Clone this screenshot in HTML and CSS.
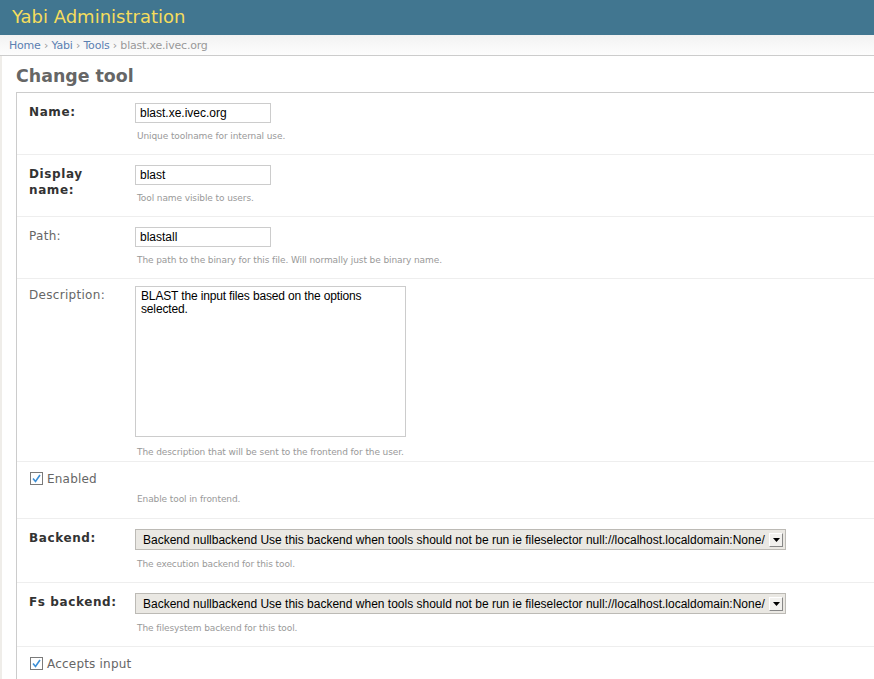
FILE: index.html
```html
<!DOCTYPE html>
<html>
<head>
<meta charset="utf-8">
<link rel="stylesheet" href="styles.css">
</head>
<body>
<div class="header"><span class="brand">Yabi Administration</span></div>
<div class="breadcrumbs"><a href="#">Home</a> › <a href="#">Yabi</a> › <a href="#">Tools</a> › blast.xe.ivec.org</div>
<div class="content">
  <h1 class="title">Change tool</h1>
  <div class="module">
    <div class="row">
      <div class="label req">Name:</div>
      <div class="field">
        <div class="input">blast.xe.ivec.org</div>
        <p class="help">Unique toolname for internal use.</p>
      </div>
    </div>
    <div class="row">
      <div class="label req">Display name:</div>
      <div class="field">
        <div class="input">blast</div>
        <p class="help">Tool name visible to users.</p>
      </div>
    </div>
    <div class="row">
      <div class="label">Path:</div>
      <div class="field">
        <div class="input">blastall</div>
        <p class="help">The path to the binary for this file. Will normally just be binary name.</p>
      </div>
    </div>
    <div class="row row-text">
      <div class="label">Description:</div>
      <div class="field">
        <div class="textarea">BLAST the input files based on the options selected.</div>
        <p class="help help-wide">The description that will be sent to the frontend for the user.</p>
      </div>
    </div>
    <div class="row check-row">
      <div class="check"><span class="box"><svg width="11" height="11" viewBox="0 0 11 11"><path d="M2 5.5 L4.5 8.5 L9 2" fill="none" stroke="#3c8fd6" stroke-width="1.6"/></svg></span>Enabled</div>
      <p class="help indent">Enable tool in frontend.</p>
    </div>
    <div class="row">
      <div class="label req">Backend:</div>
      <div class="field">
        <div class="select"><span class="sel-text">Backend nullbackend Use this backend when tools should not be run ie fileselector null://localhost.localdomain:None/</span><span class="arrow"><svg width="7" height="4" viewBox="0 0 7 4"><path d="M0 0 H7 L3.5 4 Z" fill="#000"/></svg></span></div>
        <p class="help help-sel">The execution backend for this tool.</p>
      </div>
    </div>
    <div class="row">
      <div class="label req">Fs backend:</div>
      <div class="field">
        <div class="select"><span class="sel-text">Backend nullbackend Use this backend when tools should not be run ie fileselector null://localhost.localdomain:None/</span><span class="arrow"><svg width="7" height="4" viewBox="0 0 7 4"><path d="M0 0 H7 L3.5 4 Z" fill="#000"/></svg></span></div>
        <p class="help help-sel">The filesystem backend for this tool.</p>
      </div>
    </div>
    <div class="row check-row">
      <div class="check"><span class="box"><svg width="11" height="11" viewBox="0 0 11 11"><path d="M2 5.5 L4.5 8.5 L9 2" fill="none" stroke="#3c8fd6" stroke-width="1.6"/></svg></span>Accepts input</div>
    </div>
  </div>
</div>
</body>
</html>
```

FILE: styles.css
```css
html, body { margin: 0; padding: 0; }
body {
  font-family: "DejaVu Sans", sans-serif;
  font-size: 12px;
  color: #333;
  background: #fff;
  overflow: hidden;
  height: 679px;
}
.header {
  height: 35px;
  background: #417690;
  padding-left: 12px;
  display: flex;
  align-items: center;
}
.brand {
  color: #f5dd5d;
  font-size: 18px;
  font-weight: normal;
  margin-top: -3px;
}
.breadcrumbs {
  height: 20px;
  line-height: 21px;
  padding-left: 9px;
  font-size: 11px;
  letter-spacing: -0.2px;
  color: #999;
  background: linear-gradient(#f2f2f2, #fdfdfd);
  border-bottom: 1px solid #ccc;
}
.breadcrumbs a { color: #5b80b2; text-decoration: none; }
.content {
  border-left: 2px solid #efede9;
  padding-left: 14px;
  height: 700px;
}
.title {
  margin: 0;
  padding-top: 10px;
  height: 26px;
  font-size: 17.4px;
  font-weight: bold;
  color: #666;
}
.module {
  border-left: 1px solid #ccc;
  border-top: 1px solid #ccc;
}
.row {
  display: flex;
  padding: 10px 0 12px 12px;
  border-bottom: 1px solid #eee;
}
.row-text { padding-top: 7px; padding-bottom: 3px; }
.label {
  width: 106px;
  flex: none;
  font-size: 12px;
  color: #666;
  padding-top: 1px;
  line-height: 16px;
  padding-right: 10px;
  box-sizing: border-box;
  letter-spacing: 0.3px;
}
.label.req { font-weight: bold; color: #333; letter-spacing: 0.6px; }
.field { display: flex; flex-direction: column; }
.input {
  width: 136px;
  height: 20px;
  box-sizing: border-box;
  border: 1px solid #ccc;
  font-family: "Liberation Sans", sans-serif;
  font-size: 12px;
  color: #000;
  padding: 2px 0 0 4px;
  background: #fff;
}
.textarea {
  width: 271px;
  height: 151px;
  box-sizing: border-box;
  border: 1px solid #ccc;
  font-family: "Liberation Sans", sans-serif;
  font-size: 12px;
  letter-spacing: -0.15px;
  line-height: 13px;
  color: #000;
  padding: 3px 10px 0 5px;
}
.help {
  margin: 7px 0 0 2px;
  font-size: 9px;
  color: #999;
  line-height: 12px;
  letter-spacing: -0.1px;
}
.help-wide { margin-top: 9px; }
.help-sel { margin-top: 8px; }
.check-row { flex-direction: column; padding-left: 13px; padding-bottom: 13px; }
.check {
  display: flex;
  align-items: center;
  font-size: 12px;
  letter-spacing: 0.2px;
  color: #666;
  height: 13px;
}
.box {
  width: 11px;
  height: 11px;
  border: 1px solid #7a7a7a;
  background: #fff;
  margin-right: 4px;
  display: inline-flex;
  box-sizing: content-box;
  flex: none;
}
.help.indent { margin-left: 107px; margin-top: 8px; }
.select {
  width: 651px;
  height: 21px;
  box-sizing: border-box;
  border: 1px solid #bcbab5;
  background: #eae8e3;
  display: flex;
  align-items: center;
  font-family: "Liberation Sans", sans-serif;
  font-size: 12px;
  color: #000;
  padding-left: 7px;
  padding-right: 2px;
}
.sel-text { flex: 1; white-space: nowrap; overflow: hidden; }
.arrow {
  width: 14px;
  height: 14px;
  box-sizing: border-box;
  background: #f2f1ee;
  border: 1px solid #fff;
  border-right-color: #888;
  border-bottom-color: #888;
  display: flex;
  align-items: center;
  justify-content: center;
}
```
